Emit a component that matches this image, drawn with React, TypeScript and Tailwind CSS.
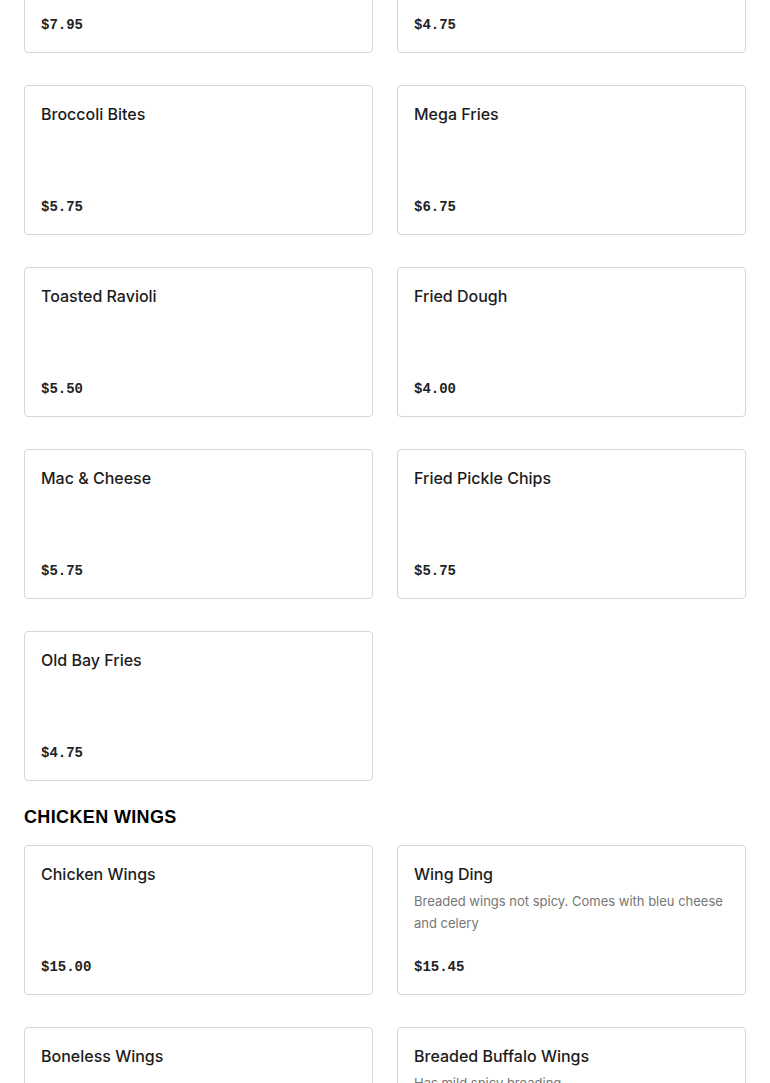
type Item = {
  name: string;
  price: string;
  description?: string;
};

const sides: Item[] = [
  { name: "Onion Rings", price: "$7.95" },
  { name: "French Fries", price: "$4.75" },
  { name: "Broccoli Bites", price: "$5.75" },
  { name: "Mega Fries", price: "$6.75" },
  { name: "Toasted Ravioli", price: "$5.50" },
  { name: "Fried Dough", price: "$4.00" },
  { name: "Mac & Cheese", price: "$5.75" },
  { name: "Fried Pickle Chips", price: "$5.75" },
  { name: "Old Bay Fries", price: "$4.75" },
];

const wings: Item[] = [
  { name: "Chicken Wings", price: "$15.00" },
  {
    name: "Wing Ding",
    price: "$15.45",
    description: "Breaded wings not spicy. Comes with bleu cheese and celery",
  },
  { name: "Boneless Wings", price: "$14.95" },
  {
    name: "Breaded Buffalo Wings",
    price: "$15.45",
    description: "Has mild spicy breading",
  },
];

const MenuCard = ({ name, price, description }: Item) => (
  <div className="flex h-[150px] flex-col rounded-[4px] border border-[#d6d6d6] bg-white pt-4 pr-3 pb-[17px] pl-4">
    <h3 className="font-['Inter',sans-serif] text-[16px] leading-6 font-medium text-[#1c1c1c]">
      {name}
    </h3>
    {description && (
      <p className="mt-1 font-['Inter',sans-serif] text-[13px] leading-[22px] text-[#767676]">
        {description}
      </p>
    )}
    <p className="mt-auto font-['Liberation_Mono',monospace] text-[14px] leading-5 font-bold text-[#222]">
      {price}
    </p>
  </div>
);

export default function App() {
  return (
    <div className="min-h-screen bg-white px-6">
      <div className="-mt-[97px] grid grid-cols-2 gap-x-6 gap-y-8">
        {sides.map((item) => (
          <MenuCard key={item.name} {...item} />
        ))}
      </div>

      <h2 className="mt-6 mb-4 font-['Liberation_Sans',Arial,sans-serif] text-[18px] leading-6 font-black tracking-[0.02em] text-black uppercase">
        Chicken Wings
      </h2>

      <div className="grid grid-cols-2 gap-x-6 gap-y-8">
        {wings.map((item) => (
          <MenuCard key={item.name} {...item} />
        ))}
      </div>
    </div>
  );
}
